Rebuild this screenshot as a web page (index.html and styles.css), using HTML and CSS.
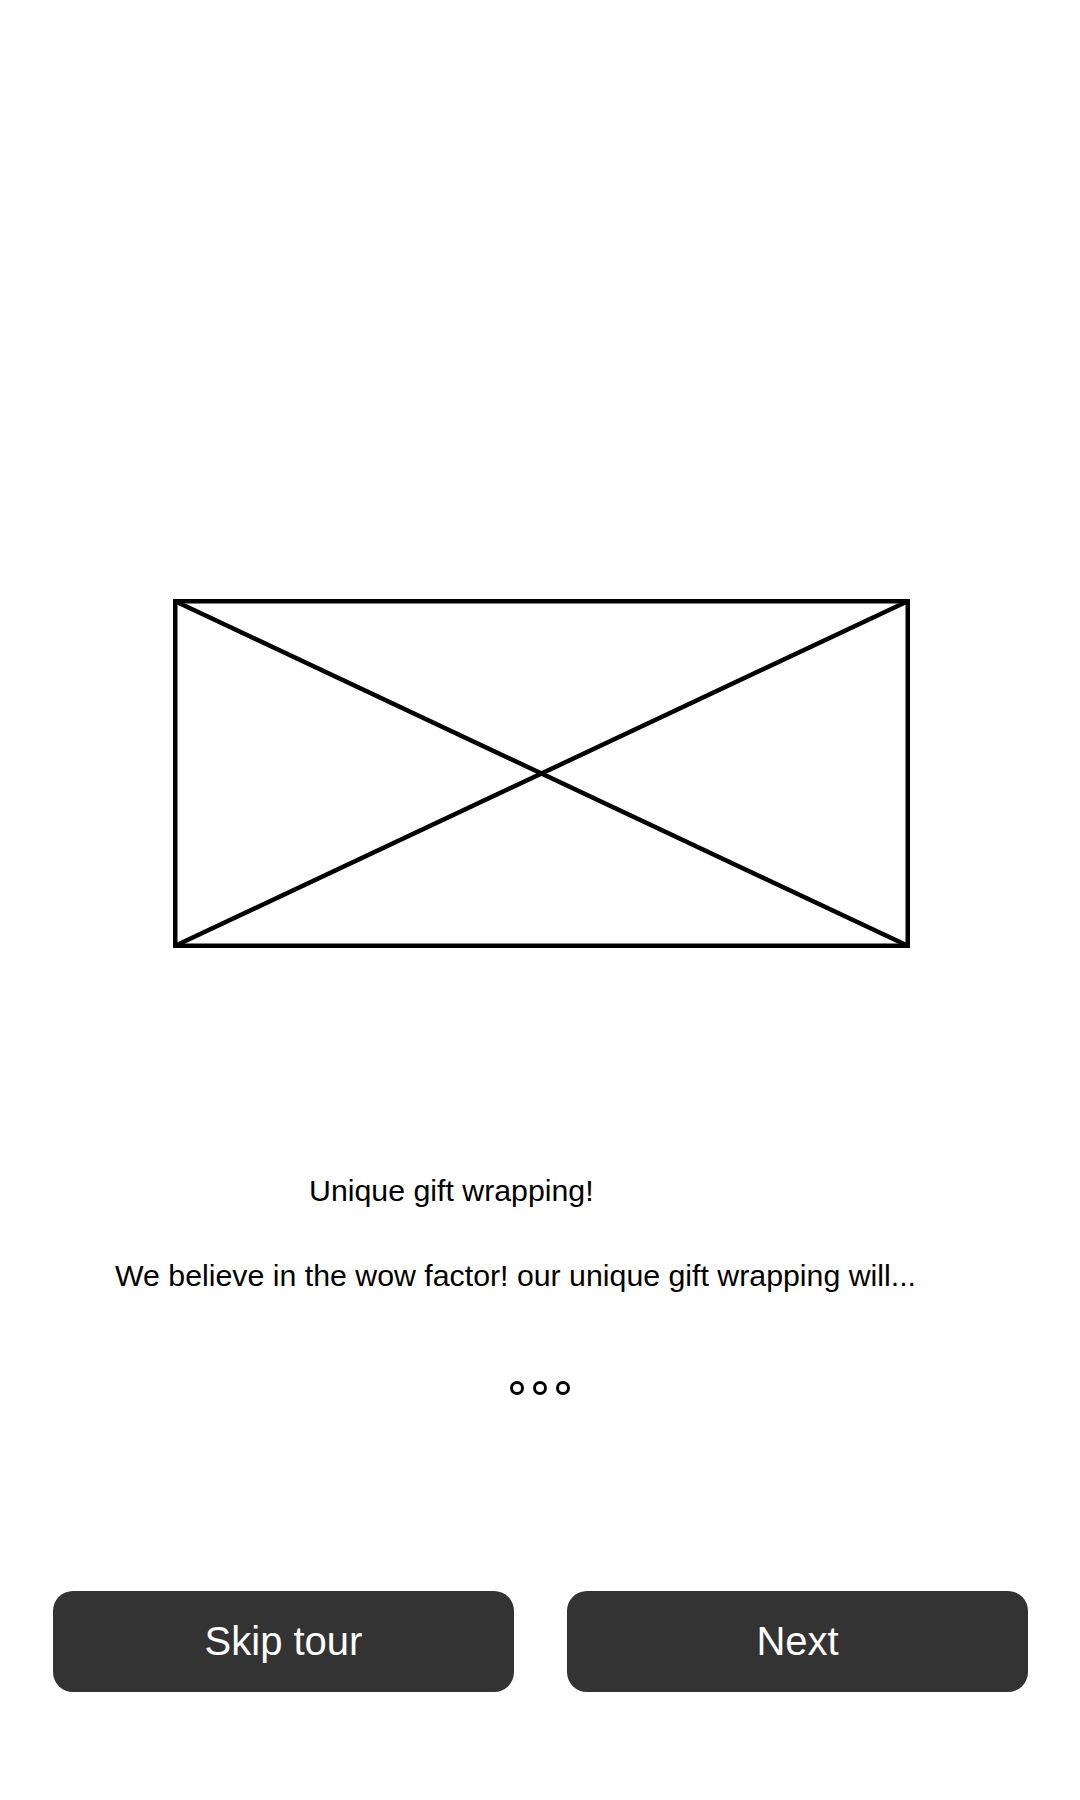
FILE: index.html
```html
<!DOCTYPE html>
<html lang="en">
<head>
<meta charset="utf-8">
<title>Tour</title>
<link rel="stylesheet" href="styles.css">
</head>
<body>
<main class="screen">
  <div class="hero">
    <svg class="placeholder" width="737" height="349" viewBox="0 0 737 349" xmlns="http://www.w3.org/2000/svg">
      <rect x="2.25" y="2.25" width="732.5" height="344.5" fill="none" stroke="#000" stroke-width="4.5"/>
      <line x1="2.25" y1="2.25" x2="734.75" y2="346.75" stroke="#000" stroke-width="4.5" stroke-linecap="round"/>
      <line x1="734.75" y1="2.25" x2="2.25" y2="346.75" stroke="#000" stroke-width="4.5" stroke-linecap="round"/>
    </svg>
  </div>
  <h1 class="title">Unique gift wrapping!</h1>
  <p class="desc">We believe in the wow factor! our unique gift wrapping will...</p>
  <div class="dots">
    <span class="dot"></span><span class="dot"></span><span class="dot"></span>
  </div>
  <div class="actions">
    <button class="btn">Skip tour</button>
    <button class="btn">Next</button>
  </div>
</main>
</body>
</html>
```

FILE: styles.css
```css
html, body {
  margin: 0;
  padding: 0;
  background: #fff;
}
body {
  font-family: "Liberation Sans", Arial, sans-serif;
  color: #000;
}
.screen {
  width: 1080px;
  height: 1800px;
  display: flex;
  flex-direction: column;
}
.hero {
  padding-top: 599px;
  display: flex;
  justify-content: center;
}
.placeholder {
  display: block;
  margin-left: 3px;
}
.title {
  margin: 226px 0 0 0;
  padding-left: 309px;
  font-size: 30.3px;
  font-weight: normal;
  line-height: 34px;
}
.desc {
  margin: 51px 0 0 0;
  padding-left: 115px;
  font-size: 30.3px;
  line-height: 34px;
}
.dots {
  margin-top: 88px;
  display: flex;
  justify-content: center;
  gap: 9px;
}
.dot {
  width: 14px;
  height: 14px;
  box-sizing: border-box;
  border: 3px solid #000;
  border-radius: 50%;
}
.actions {
  margin-top: 196px;
  padding: 0 52px 0 53px;
  display: flex;
  gap: 53px;
}
.btn {
  flex: 1;
  height: 101px;
  border: none;
  border-radius: 20px;
  background: #333;
  color: #fff;
  font-family: "Liberation Sans", Arial, sans-serif;
  font-size: 40px;
  display: flex;
  align-items: center;
  justify-content: center;
  padding: 0;
}
```
